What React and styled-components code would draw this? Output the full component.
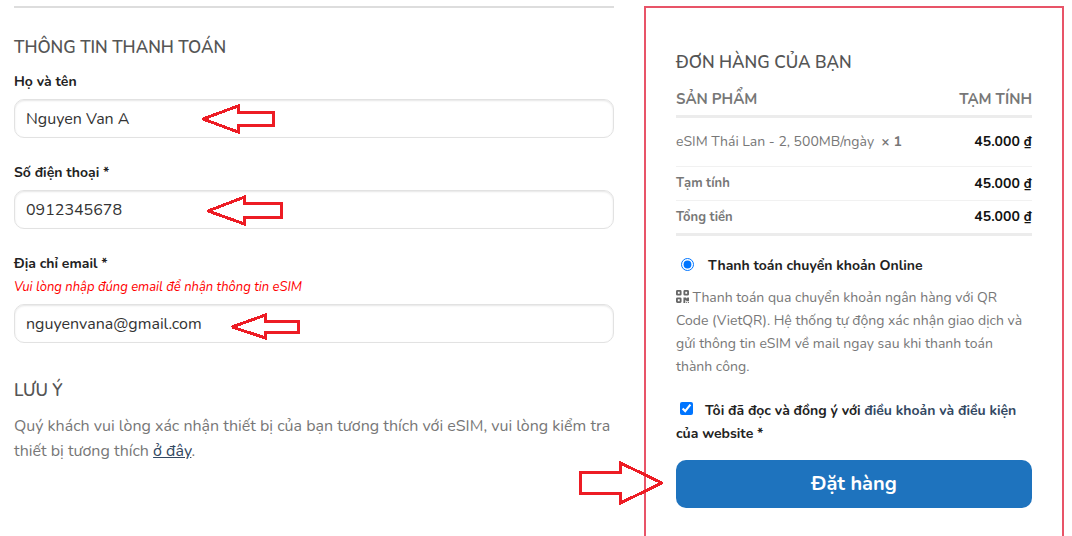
import React, { useState } from 'react';
import styled, { createGlobalStyle } from 'styled-components';

function Arrow({ left, top, width, height, points }) {
  return (
    <ArrowSvg $left={left} $top={top} width={width} height={height} aria-hidden="true">
      <polygon points={points} />
    </ArrowSvg>
  );
}

function QrIcon() {
  return (
    <QrSvg viewBox="0 0 448 448" aria-hidden="true">
      <path
        fillRule="evenodd"
        d="M48 0h96a48 48 0 0 1 48 48v96a48 48 0 0 1-48 48H48a48 48 0 0 1-48-48V48A48 48 0 0 1 48 0zM64 64v64h64V64zM304 0h96a48 48 0 0 1 48 48v96a48 48 0 0 1-48 48h-96a48 48 0 0 1-48-48V48a48 48 0 0 1 48-48zM320 64v64h64V64zM48 256h96a48 48 0 0 1 48 48v96a48 48 0 0 1-48 48H48a48 48 0 0 1-48-48v-96a48 48 0 0 1 48-48zM64 320v64h64v-64zM256 256h96v32h32v-32h64v128h-96v-32h-32v96h-64zM352 416h32v32h-32zM416 416h32v32h-32z"
      />
    </QrSvg>
  );
}

function App() {
  const [name, setName] = useState('Nguyen Van A');
  const [phone, setPhone] = useState('0912345678');
  const [email, setEmail] = useState('nguyenvana@gmail.com');
  const [agree, setAgree] = useState(true);

  return (
    <>
      <GlobalStyle />
      <Page>
        <Billing>
          <Title>THÔNG TIN THANH TOÁN</Title>

          <Field>
            <Label htmlFor="name">Họ và tên</Label>
            <InputBox>
              <Input id="name" value={name} onChange={(e) => setName(e.target.value)} />
              <Arrow left={186} top={4} width={76} height={34} points="3,16 38,3 38,9.5 73.5,9.5 73.5,22.5 38,22.5 38,29" />
            </InputBox>
          </Field>

          <Field>
            <Label htmlFor="phone">Số điện thoại *</Label>
            <InputBox>
              <Input id="phone" type="tel" value={phone} onChange={(e) => setPhone(e.target.value)} />
              <Arrow left={190} top={4} width={80} height={34} points="4,17 40.5,3 40.5,9.5 77.5,9.5 77.5,23.5 40.5,23.5 40.5,30" />
            </InputBox>
          </Field>

          <Field>
            <Label htmlFor="email">Địa chỉ email *</Label>
            <Hint id="emailnote">Vui lòng nhập đúng email để nhận thông tin eSIM</Hint>
            <InputBox>
              <Input
                id="email"
                type="email"
                value={email}
                onChange={(e) => setEmail(e.target.value)}
                aria-describedby="emailnote"
              />
              <Arrow left={214} top={8} width={74} height={30} points="4,15 37.5,3 37.5,9.5 70.5,9.5 70.5,20.5 37.5,20.5 37.5,26" />
            </InputBox>
          </Field>

          <Note>
            <Title>LƯU Ý</Title>
            <NoteText>
              Quý khách vui lòng xác nhận thiết bị của bạn tương thích với eSIM, vui lòng kiểm tra
              thiết bị tương thích <NoteLink href="#devices">ở đây</NoteLink>.
            </NoteText>
          </Note>
        </Billing>

        <Order>
          <Title>ĐƠN HÀNG CỦA BẠN</Title>
          <OrderTable>
            <thead>
              <tr>
                <HeadCell>SẢN PHẨM</HeadCell>
                <HeadCell>TẠM TÍNH</HeadCell>
              </tr>
            </thead>
            <tbody>
              <tr>
                <ProductCell>
                  eSIM Thái Lan - 2, 500MB/ngày&nbsp; <strong>× 1</strong>
                </ProductCell>
                <ProductCell>
                  <Price>45.000 ₫</Price>
                </ProductCell>
              </tr>
            </tbody>
            <tfoot>
              <tr>
                <TotalName>Tạm tính</TotalName>
                <TotalCell>
                  <Price>45.000 ₫</Price>
                </TotalCell>
              </tr>
              <tr>
                <TotalName $last>Tổng tiền</TotalName>
                <TotalCell $last>
                  <Price>45.000 ₫</Price>
                </TotalCell>
              </tr>
            </tfoot>
          </OrderTable>

          <Payment>
            <Radio id="bank" name="payment" defaultChecked />
            <label htmlFor="bank">Thanh toán chuyển khoản Online</label>
          </Payment>
          <PaymentText>
            <QrIcon /> Thanh toán qua chuyển khoản ngân hàng với QR Code (VietQR). Hệ thống tự động xác
            nhận giao dịch và gửi thông tin eSIM về mail ngay sau khi thanh toán thành công.
          </PaymentText>

          <Terms>
            <Checkbox checked={agree} onChange={(e) => setAgree(e.target.checked)} />
            Tôi đã đọc và đồng ý với <TermsLink href="#terms">điều khoản và điều kiện</TermsLink> của
            website *
          </Terms>

          <SubmitBox>
            <Submit type="button">Đặt hàng</Submit>
            <Arrow left={-98} top={0} width={88} height={48} points="2.5,12.5 42.5,12.5 42.5,3 84,23 42.5,43 42.5,33 2.5,33" />
          </SubmitBox>
        </Order>
      </Page>
    </>
  );
}

export default App;

const GlobalStyle = createGlobalStyle`
  * {
    box-sizing: border-box;
  }
  body {
    margin: 0;
    background-color: #fff;
    color: #777;
    font-family: Nunito, 'Noto Sans', sans-serif;
    font-size: 14px;
  }
`;

const Page = styled.main`
  display: grid;
  grid-template-columns: 10fr 7fr;
  gap: 30px;
  min-height: 100vh;
  padding: 6px 8px 0 14px;
`;

const Billing = styled.section`
  border-top: 2px solid #ddd;
  padding-top: 28px;
`;

const Title = styled.h3`
  margin: 0;
  color: #555;
  font-size: 17px;
  font-weight: 600;
  line-height: 24px;
`;

const Field = styled.div`
  margin: 10px 0 23px;
`;

const Label = styled.label`
  display: block;
  margin-bottom: 5px;
  color: #222;
  font-weight: 700;
  line-height: 24px;
`;

const Hint = styled.p`
  margin: -5px 0 5px;
  color: #f00;
  font-size: 13px;
  font-style: italic;
  line-height: 23px;
`;

const InputBox = styled.div`
  position: relative;
`;

const Input = styled.input`
  display: block;
  width: 100%;
  height: 39px;
  padding: 0 11px;
  border: 1px solid #e2e2e2;
  border-radius: 10px;
  background-color: #fff;
  box-shadow: inset 0 1px 2px rgba(0, 0, 0, 0.1);
  color: #333;
  font-family: inherit;
  font-size: 16px;
  &:focus {
    outline: none;
  }
`;

const ArrowSvg = styled.svg`
  position: absolute;
  left: ${(props) => props.$left}px;
  top: ${(props) => props.$top}px;
  fill: none;
  stroke: #ed1c24;
  stroke-width: 3;
  stroke-miterlimit: 2;
  shape-rendering: crispEdges;
  pointer-events: none;
`;

const Note = styled.div`
  margin-top: 36px;
`;

const NoteText = styled.p`
  margin: 11px 0 0;
  font-size: 16px;
  line-height: 25px;
`;

const NoteLink = styled.a`
  color: #334862;
`;

const Order = styled.section`
  border: 2px solid #e85468;
  border-bottom: none;
  padding: 43px 30px 28px;
`;

const OrderTable = styled.table`
  width: 100%;
  border-collapse: collapse;
  th,
  td {
    padding: 0;
    text-align: left;
  }
  th:last-child,
  td:last-child {
    text-align: right;
  }
`;

const HeadCell = styled.th`
  height: 41px;
  border-bottom: 3px solid #ececec;
  font-size: 15px;
  font-weight: 700;
  line-height: 20px;
  vertical-align: bottom;
  && {
    padding-bottom: 6px;
  }
`;

const ProductCell = styled.td`
  height: 50px;
  border-bottom: 1px solid #f1f1f1;
`;

const TotalName = styled.th`
  height: 34px;
  border-bottom: ${(props) => (props.$last ? '3px solid #ececec' : '1px solid #f1f1f1')};
  font-size: 13px;
  font-weight: 700;
`;

const TotalCell = styled.td`
  border-bottom: ${(props) => (props.$last ? '3px solid #ececec' : '1px solid #f1f1f1')};
`;

const Price = styled.strong`
  color: #111;
  font-weight: 700;
  white-space: nowrap;
`;

const Payment = styled.div`
  display: flex;
  align-items: center;
  margin: 18px 0 8px;
  color: #222;
  font-weight: 700;
  line-height: 24px;
`;

const Radio = styled.input.attrs({ type: 'radio' })`
  width: 13px;
  height: 13px;
  margin: 0 14px 3px 5px;
`;

const PaymentText = styled.p`
  margin: 0;
  line-height: 23px;
`;

const QrSvg = styled.svg`
  width: 13px;
  height: 13px;
  fill: #666;
  vertical-align: -1px;
`;

const Terms = styled.label`
  display: block;
  margin-top: 21px;
  color: #222;
  font-weight: 700;
  line-height: 23px;
`;

const Checkbox = styled.input.attrs({ type: 'checkbox' })`
  width: 13px;
  height: 13px;
  margin: 0 12px 0 4px;
  vertical-align: 0;
`;

const TermsLink = styled.a`
  color: #334862;
  text-decoration: none;
`;

const SubmitBox = styled.div`
  position: relative;
  margin-top: 15px;
`;

const Submit = styled.button`
  display: block;
  width: 100%;
  height: 48px;
  border: none;
  border-radius: 10px;
  background-color: #1e73be;
  color: #fff;
  font-family: inherit;
  font-size: 20px;
  font-weight: 700;
`;
